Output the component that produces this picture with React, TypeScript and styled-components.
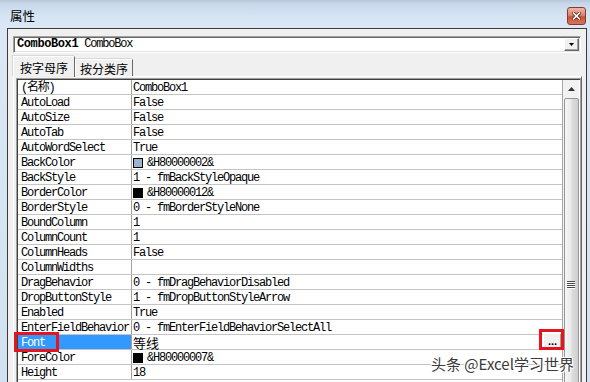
import React from 'react';
import styled, { createGlobalStyle } from 'styled-components';

const Global = createGlobalStyle`
  html, body { margin: 0; padding: 0; width: 590px; height: 382px; overflow: hidden; background: #d4e2f1; }
`;

const Frame = styled.div`
  position: relative;
  width: 590px;
  height: 382px;
  overflow: hidden;
  display: flex;
  flex-direction: column;
  background: linear-gradient(180deg, #b9c8d8 0px, #c8d9ec 4px, #d5e4f4 16px, #dbe7f5 28px, #d2e1f1 100%);
`;

const TitleBar = styled.div`
  height: 28px;
  flex: none;
  display: flex;
  align-items: flex-start;
  justify-content: space-between;
  padding: 0 4px 0 10px;
  box-sizing: border-box;
`;

const TitleText = styled.div`
  font-family: "Noto Sans CJK SC", sans-serif;
  font-size: 12.5px;
  line-height: 16px;
  margin-top: 8px;
  color: #000;
`;

const CloseButton = styled.div`
  width: 19px;
  height: 18px;
  margin-top: 7px;
  box-sizing: border-box;
  border: 1px solid #8a3a2c;
  border-radius: 3px;
  background: linear-gradient(180deg, #eeb6a6 0%, #dd8571 45%, #c8523a 55%, #d7735a 100%);
  display: flex;
  align-items: center;
  justify-content: center;
`;

const Client = styled.div`
  flex: 1;
  min-height: 0;
  margin: 0 3px 0 7px;
  border: 1px solid #3a3a3a;
  border-bottom: none;
  background: #f0f0f0;
  display: flex;
  flex-direction: column;
`;

const Combo = styled.div`
  flex: none;
  height: 17px;
  box-sizing: border-box;
  margin: 7px 5px 0 5px;
  border-style: solid;
  border-width: 1px;
  border-color: #a0a0a0 #fff #fff #a0a0a0;
  box-shadow: inset 1px 1px 0 #696969, inset -1px -1px 0 #e3e3e3;
  background: #fff;
  display: flex;
  align-items: center;
  padding: 1px 1px 1px 3px;
  font-family: "Liberation Mono", monospace;
  font-size: 12px;
  color: #000;
`;

const ComboText = styled.span<{ $bold?: boolean }>`
  font-weight: ${p => (p.$bold ? 700 : 400)};
  letter-spacing: ${p => (p.$bold ? '-0.4px' : '-1.2px')};
  white-space: pre;
  line-height: 13px;
`;

const DropButton = styled.div`
  margin-left: auto;
  width: 15px;
  height: 13px;
  box-sizing: border-box;
  background: #f0f0f0;
  border-style: solid;
  border-width: 1px;
  border-color: #fff #696969 #696969 #fff;
  box-shadow: inset -1px -1px 0 #a0a0a0;
  display: flex;
  align-items: center;
  justify-content: center;
`;

const TabRow = styled.div`
  flex: none;
  display: flex;
  align-items: flex-end;
  height: 20px;
  margin: 3px 0 0 5px;
`;

const Tab = styled.div<{ $active?: boolean; $width: number }>`
  position: relative;
  z-index: ${p => (p.$active ? 2 : 1)};
  width: ${p => p.$width}px;
  height: ${p => (p.$active ? 21 : 17)}px;
  margin-bottom: ${p => (p.$active ? -1 : 0)}px;
  box-sizing: border-box;
  border-style: solid;
  border-width: 1px 1px 0 1px;
  border-color: #fff #696969 transparent #fff;
  box-shadow: -1px -1px 0 #d8d8d8;
  background: #f0f0f0;
  display: flex;
  align-items: center;
  justify-content: center;
  font-family: "Noto Sans CJK SC", sans-serif;
  font-size: 12px;
  color: #000;
`;

const Panel = styled.div`
  flex: 1;
  min-height: 0;
  margin: 0 4px 0 5px;
  border-style: solid;
  border-width: 1px 1px 0 1px;
  border-color: #fff #696969 transparent #fff;
  padding: 1px 0 0 2px;
  display: flex;
`;

const Grid = styled.div`
  flex: 1;
  min-width: 0;
  display: flex;
  border: 1px solid #a0a0a0;
  border-bottom: none;
  box-shadow: inset 1px 1px 0 #404040;
  padding: 1px 1px 0 1px;
  background: #fff;
  overflow: hidden;
`;

const Rows = styled.div`
  flex: 1;
  min-width: 0;
  display: flex;
  flex-direction: column;
`;

const Row = styled.div`
  flex: none;
  display: grid;
  grid-template-columns: 114px 1fr;
  height: 15px;
  box-sizing: border-box;
  border-bottom: 1px solid #c4c4c4;
  font-family: "Liberation Mono", "Noto Sans CJK SC", monospace;
  font-size: 12px;
  letter-spacing: -1.2px;
  color: #000;
`;

const NameCell = styled.div<{ $selected?: boolean }>`
  box-sizing: border-box;
  border-right: 1px solid #a0a0a0;
  padding: 2px 0 0 3px;
  line-height: 12px;
  white-space: nowrap;
  background: ${p => (p.$selected ? '#3399ff' : 'transparent')};
  color: ${p => (p.$selected ? '#fff' : '#000')};
`;

const ValueCell = styled.div`
  display: flex;
  align-items: flex-start;
  padding: 2px 0 0 1px;
  line-height: 12px;
  white-space: nowrap;
  min-width: 0;
`;

const Swatch = styled.span<{ $color: string }>`
  flex: none;
  width: 10px;
  height: 10px;
  margin: 1px 4px 0 0;
  box-sizing: border-box;
  border: 1px solid #000;
  background: ${p => p.$color};
`;

const FontName = styled.span`
  font-family: "Noto Sans CJK SC", sans-serif;
  font-size: 13px;
  letter-spacing: 0;
  line-height: 12px;
`;

const EllipsisButton = styled.div`
  margin-left: auto;
  margin-top: -4px;
  width: 19px;
  height: 16px;
  box-sizing: border-box;
  border-style: solid;
  border-width: 1px;
  border-color: #fff #696969 #696969 #fff;
  box-shadow: inset -1px -1px 0 #a0a0a0;
  background: #f0f0f0;
  display: flex;
  justify-content: center;
  align-items: flex-end;
  font-family: "Liberation Sans", sans-serif;
  font-weight: 700;
  font-size: 11px;
  letter-spacing: 0;
  line-height: 12px;
  padding-bottom: 1px;
  color: #000;
`;

const ScrollBar = styled.div`
  flex: none;
  width: 17px;
  box-sizing: border-box;
  border-left: 1px solid #a8a8a8;
  background: #f2f2f2;
  display: flex;
  flex-direction: column;
  align-items: center;
`;

const UpButton = styled.div`
  flex: none;
  height: 18px;
  width: 100%;
  display: flex;
  align-items: center;
  justify-content: center;
`;

const Thumb = styled.div`
  flex: none;
  width: 15px;
  height: 372px;
  box-sizing: border-box;
  border: 1px solid #979797;
  border-radius: 2px;
  background: linear-gradient(90deg, #f6f6f6 0%, #ececec 40%, #dadada 60%, #cfcfcf 100%);
  display: flex;
  flex-direction: column;
  align-items: center;
  justify-content: center;
  gap: 1px;
`;

const GripLine = styled.div`
  width: 8px;
  height: 1px;
  background: #4a4a4a;
  box-shadow: 0 1px 0 #fff;
`;

const Mark = styled.div<{ $x: number; $y: number; $w: number; $h: number }>`
  position: absolute;
  left: ${p => p.$x}px;
  top: ${p => p.$y}px;
  width: ${p => p.$w}px;
  height: ${p => p.$h}px;
  box-sizing: border-box;
  border: 3px solid #e5141d;
  pointer-events: none;
`;

const Watermark = styled.div`
  position: absolute;
  left: 431px;
  top: 355px;
  font-family: "Noto Sans CJK SC", sans-serif;
  font-size: 15px;
  line-height: 18px;
  color: #3a3a3a;
  white-space: nowrap;
  text-shadow: 1px 0 0 #fff, -1px 0 0 #fff, 0 1px 0 #fff, 0 -1px 0 #fff, 1px 1px 1px #fff, -1px -1px 1px #fff;
`;

type Prop = { name: string; value?: string; swatch?: string; font?: boolean };

const props: Prop[] = [
  { name: '(名称)', value: 'ComboBox1' },
  { name: 'AutoLoad', value: 'False' },
  { name: 'AutoSize', value: 'False' },
  { name: 'AutoTab', value: 'False' },
  { name: 'AutoWordSelect', value: 'True' },
  { name: 'BackColor', value: '&H80000002&', swatch: '#99b4d1' },
  { name: 'BackStyle', value: '1 - fmBackStyleOpaque' },
  { name: 'BorderColor', value: '&H80000012&', swatch: '#000' },
  { name: 'BorderStyle', value: '0 - fmBorderStyleNone' },
  { name: 'BoundColumn', value: '1' },
  { name: 'ColumnCount', value: '1' },
  { name: 'ColumnHeads', value: 'False' },
  { name: 'ColumnWidths', value: '' },
  { name: 'DragBehavior', value: '0 - fmDragBehaviorDisabled' },
  { name: 'DropButtonStyle', value: '1 - fmDropButtonStyleArrow' },
  { name: 'Enabled', value: 'True' },
  { name: 'EnterFieldBehavior', value: '0 - fmEnterFieldBehaviorSelectAll' },
  { name: 'Font', value: '等线', font: true },
  { name: 'ForeColor', value: '&H80000007&', swatch: '#000' },
  { name: 'Height', value: '18' },
];

export default function App() {
  return (
    <Frame>
      <Global />
      <TitleBar>
        <TitleText>属性</TitleText>
        <CloseButton>
          <svg width="9" height="8" viewBox="0 0 9 8">
            <path d="M1.5 1 L7.5 7 M7.5 1 L1.5 7" stroke="#5a2418" strokeWidth="3.2" strokeLinecap="square" />
            <path d="M1.5 1 L7.5 7 M7.5 1 L1.5 7" stroke="#fff" strokeWidth="1.6" strokeLinecap="square" />
          </svg>
        </CloseButton>
      </TitleBar>
      <Client>
        <Combo>
          <ComboText $bold>ComboBox1</ComboText>
          <ComboText> ComboBox</ComboText>
          <DropButton>
            <svg width="5" height="3" viewBox="0 0 5 3">
              <path d="M0 0 H5 L2.5 3 Z" fill="#000" />
            </svg>
          </DropButton>
        </Combo>
        <TabRow>
          <Tab $active $width={62}>按字母序</Tab>
          <Tab $width={58}>按分类序</Tab>
        </TabRow>
        <Panel>
          <Grid>
            <Rows>
              {props.map(p => (
                <Row key={p.name}>
                  <NameCell $selected={p.font}>{p.name}</NameCell>
                  <ValueCell>
                    {p.swatch && <Swatch $color={p.swatch} />}
                    {p.font ? <FontName>{p.value}</FontName> : <span>{p.value}</span>}
                    {p.font && <EllipsisButton>...</EllipsisButton>}
                  </ValueCell>
                </Row>
              ))}
            </Rows>
            <ScrollBar>
              <UpButton>
                <svg width="7" height="4" viewBox="0 0 7 4">
                  <path d="M3.5 0 L7 4 H0 Z" fill="#333" />
                </svg>
              </UpButton>
              <Thumb>
                <GripLine />
                <GripLine />
                <GripLine />
                <GripLine />
              </Thumb>
            </ScrollBar>
          </Grid>
        </Panel>
      </Client>
      <Mark $x={14} $y={332} $w={45} $h={20} />
      <Mark $x={539} $y={329} $w={25} $h={21} />
      <Watermark>头条 @Excel学习世界</Watermark>
    </Frame>
  );
}
